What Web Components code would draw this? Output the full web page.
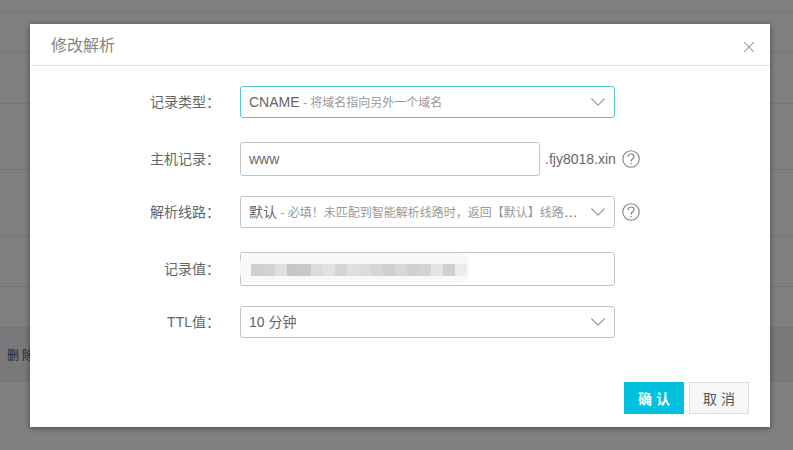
<!DOCTYPE html>
<html>
<head>
<meta charset="utf-8">
<style>
  html, body { margin: 0; height: 100%; overflow: hidden; }
  body { font-family: "Liberation Sans", "Noto Sans CJK SC", sans-serif; }
</style>
</head>
<body>
<dns-backdrop></dns-backdrop>
<dns-dialog heading="修改解析">
  <dns-field label="记录类型：">
    <dns-select focused><span>CNAME</span><small> - 将域名指向另外一个域名</small></dns-select>
  </dns-field>
  <dns-field label="主机记录：">
    <dns-input value="www" suffix=".fjy8018.xin" help></dns-input>
  </dns-field>
  <dns-field label="解析线路：">
    <dns-select help><span>默认</span><small> - 必填！未匹配到智能解析线路时，返回【默认】线路设置结果</small></dns-select>
  </dns-field>
  <dns-field label="记录值：">
    <dns-input blurred></dns-input>
  </dns-field>
  <dns-field label="TTL值：">
    <dns-select><span>10 分钟</span></dns-select>
  </dns-field>
  <dns-button slot="footer" primary>确 认</dns-button>
  <dns-button slot="footer">取 消</dns-button>
</dns-dialog>

<script>
const HELP_ICON = `<svg class="help" width="18" height="18" viewBox="0 0 18 18" fill="none" stroke="#808080">
  <circle cx="9" cy="9" r="8.2" stroke-width="1.1"/>
  <path d="M6 7c0-1.8 1.3-3 3.1-3 1.7 0 2.9 1.1 2.9 2.6 0 1.2-.8 1.8-1.6 2.4-.7.5-1.1 1-1.1 2v.6" stroke-width="1.2"/>
  <path d="M8.3 12.9h1.3v1.4H8.3z" fill="#808080" stroke="none"/>
</svg>`;

// dimmed table behind the dialog
class DnsBackdrop extends HTMLElement {
  constructor() {
    super();
    this.attachShadow({ mode: 'open' });
    const rows = [12, 41, 51, 66, 66, 51, 41, 54, 68];
    this.shadowRoot.innerHTML = `
      <style>
        :host { display: block; height: 450px; overflow: hidden; background: #808080; }
        .row { box-sizing: border-box; border-bottom: 1px solid #757575; }
        .row.del { background: #79797c; display: flex; align-items: center; padding-left: 7px;
          font-size: 12px; color: #23272e; letter-spacing: 3px; }
        .row:last-child { border-bottom: 0; }
      </style>
      ${rows.map((h, i) => `<div class="row ${i === 7 ? 'del' : ''}" style="height:${h}px">${i === 7 ? '删除' : ''}</div>`).join('')}
    `;
  }
}

class DnsDialog extends HTMLElement {
  constructor() {
    super();
    this.attachShadow({ mode: 'open' });
    this.shadowRoot.innerHTML = `
      <style>
        :host { position: absolute; left: 30px; top: 24px; width: 740px; height: 403px; box-sizing: border-box;
          display: flex; flex-direction: column; background: #fff; box-shadow: 0 1px 6px rgba(0,0,0,.45); }
        header { height: 41px; flex: none; border-bottom: 1px solid #e1e1e1; margin-left: 1px; display: flex;
          align-items: center; justify-content: space-between; padding: 0 16px 0 20px; box-sizing: content-box;
          font-size: 16px; color: #858585; }
        header span { margin-top: -2px; }
        header svg { margin-top: 5px; }
        main { flex: 1; padding-top: 20px; display: flex; flex-direction: column; }
        footer { display: flex; justify-content: flex-end; gap: 5px; padding: 0 21px 13px 0; }
      </style>
      <header>
        <span>${this.getAttribute('heading')}</span>
        <svg width="10" height="10" viewBox="0 0 10 10" stroke="#a3a3a3" stroke-width="1.1" fill="none"><path d="M0 0l10 10M10 0L0 10"/></svg>
      </header>
      <main><slot></slot></main>
      <footer><slot name="footer"></slot></footer>
    `;
  }
}

class DnsField extends HTMLElement {
  constructor() {
    super();
    this.attachShadow({ mode: 'open' });
    // select rows are 2px shorter than input rows, the leftover goes below them
    const gap = this.querySelector('dns-select') ? 24 : 20;
    this.shadowRoot.innerHTML = `
      <style>
        :host { display: flex; align-items: center; margin-bottom: ${gap}px; font-size: 14px; color: #666; }
        label { width: 210px; flex: none; text-align: right; padding: 0 20px 2px 0; box-sizing: border-box; }
      </style>
      <label>${this.getAttribute('label')}</label>
      <slot></slot>
    `;
  }
}

class DnsSelect extends HTMLElement {
  constructor() {
    super();
    this.attachShadow({ mode: 'open' });
    const focused = this.hasAttribute('focused');
    const help = this.hasAttribute('help');
    this.shadowRoot.innerHTML = `
      <style>
        :host { display: flex; align-items: center; gap: 7px; }
        .box { box-sizing: border-box; width: 375px; height: 32px; display: flex; align-items: center;
          padding: 0 9px 0 8px; border: 1px solid ${focused ? '#57c4d8' : '#c4c4c4'}; border-radius: 3px; background: #fff; }
        .text { flex: 1; min-width: 0; padding: 0 11px 2px 0; white-space: nowrap; overflow: hidden; text-overflow: ellipsis;
          font-size: 14px; color: #666; }
        ::slotted(small) { font-size: 12px; color: #999; }
        svg.arrow { flex: none; }
      </style>
      <div class="box">
        <div class="text"><slot></slot></div>
        <svg class="arrow" width="14" height="8" viewBox="0 0 14 8" fill="none" stroke="#999" stroke-width="1.1"><path d="M.4.5L7 7.2 13.6.5"/></svg>
      </div>
      ${help ? HELP_ICON : ''}
    `;
  }
}

class DnsInput extends HTMLElement {
  constructor() {
    super();
    this.attachShadow({ mode: 'open' });
    const suffix = this.getAttribute('suffix');
    const help = this.hasAttribute('help');
    const blurred = this.hasAttribute('blurred');
    // pixelated mosaic that hides the record value
    const blocks = ['#d0d0d2','#d2d2d4','#e0e0e0','#c6c6c8','#c8c8ca','#dcdcdc','#e2e2e2','#d4d4d6','#e0e0e0','#dcdcdc','#d6d6d8','#cfcfd1','#d8d8da','#d0d0d2','#d4d4d6','#e4e4e4','#d0d0d2','#ececec'];
    this.shadowRoot.innerHTML = `
      <style>
        :host { display: flex; align-items: center; font-size: 14px; color: #666; }
        .box { position: relative; box-sizing: border-box; height: 34px; display: flex; align-items: center; padding: 0 8px;
          width: ${suffix ? 300 : 375}px; border: 1px solid #c4c4c4; border-radius: 3px; background: #fff; }
        .suffix { margin-left: 5px; }
        .help { margin-left: 6px; }
        .mask { position: absolute; left: -1px; top: 0; width: 229px; height: 30px; background: #f8f8f8; border-radius: 10px;
          display: flex; align-items: center; padding: 4px 0 0 11px; box-sizing: border-box; }
        .mask i { width: 12px; height: 12px; flex: none; }
      </style>
      <div class="box">${this.getAttribute('value') || ''}${blurred ? `<div class="mask">${blocks.map(c => `<i style="background:${c}"></i>`).join('')}</div>` : ''}</div>
      ${suffix ? `<span class="suffix">${suffix}</span>` : ''}
      ${help ? HELP_ICON : ''}
    `;
  }
}

class DnsButton extends HTMLElement {
  constructor() {
    super();
    this.attachShadow({ mode: 'open' });
    const primary = this.hasAttribute('primary');
    this.shadowRoot.innerHTML = `
      <style>
        :host { display: flex; align-items: center; justify-content: center; box-sizing: border-box; width: 60px; height: 32px;
          font-size: 14px; font-weight: ${primary ? 'bold' : 'normal'};
          background: ${primary ? '#00c1de' : '#f7f7f7'}; color: ${primary ? '#fff' : '#555'};
          border: ${primary ? '0' : '1px solid #ddd'}; }
      </style>
      <slot></slot>
    `;
  }
}

customElements.define('dns-backdrop', DnsBackdrop);
customElements.define('dns-dialog', DnsDialog);
customElements.define('dns-field', DnsField);
customElements.define('dns-select', DnsSelect);
customElements.define('dns-input', DnsInput);
customElements.define('dns-button', DnsButton);
</script>
</body>
</html>
